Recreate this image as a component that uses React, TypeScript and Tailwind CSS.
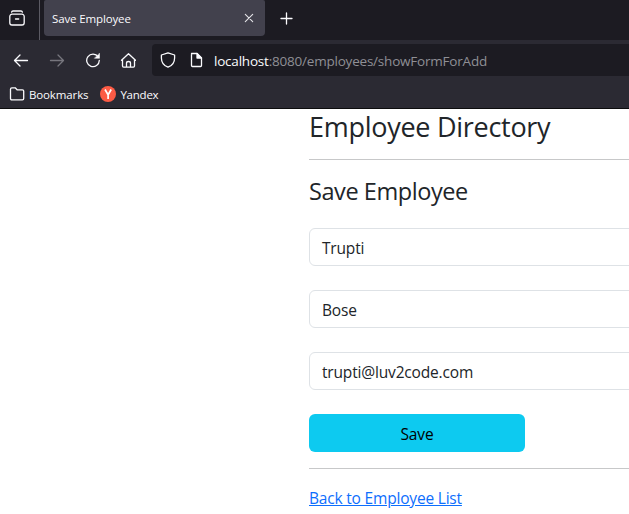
import type { ReactNode } from "react";

function Icon({ className, children }: { className: string; children: ReactNode }) {
  return (
    <svg
      viewBox="0 0 16 16"
      className={`h-4 w-4 shrink-0 ${className}`}
      fill="none"
      stroke="currentColor"
      strokeWidth="1.3"
      strokeLinecap="round"
      strokeLinejoin="round"
    >
      {children}
    </svg>
  );
}

function TabStrip() {
  return (
    <div className="flex h-10 bg-[#1c1b22]">
      <div className="flex w-10 border-r border-[#5b5a63] pt-[10px] pl-[9px]">
        <Icon className="text-[#fbfbfe]">
          <path d="M2.600 2.200Q2.800 1 4 1h8q1.200 0 1.400 1.200M3 4.200h10a2.200 2.200 0 0 1 2.200 2.200v6.400a2.200 2.200 0 0 1-2.200 2.200H3A2.200 2.200 0 0 1 .8 12.800V6.400A2.200 2.200 0 0 1 3 4.200zM6.500 9h3.200" />
        </Icon>
      </div>
      <div className="ml-1 flex h-9 w-[221px] items-center justify-between rounded-b-[4px] rounded-t-[2px] bg-[#42414d] pr-2 pl-2">
        <span className="pt-[2px] text-[11.5px] tracking-[-0.13px]">Save Employee</span>
        <Icon className="text-[#e4e4e8]">
          <path d="m4.3 4.3 7.4 7.4m0-7.4-7.4 7.4" strokeWidth="1.1" />
        </Icon>
      </div>
      <div className="pt-[11px] pl-[14px]">
        <Icon className="text-[#fbfbfe]">
          <path d="M7.5 2v11M2 7.5h11" />
        </Icon>
      </div>
    </div>
  );
}

function NavBar() {
  return (
    <div className="flex h-10 items-center bg-[#2b2a33] text-[#fbfbfe]">
      <Icon className="ml-[13px]">
        <path d="M14.5 8.5h-13M7 3 1.5 8.5 7 14" />
      </Icon>
      <Icon className="ml-5 text-[#77767e]">
        <path d="M1.5 8.5h13M9 3l5.500 5.500L9 14" />
      </Icon>
      <Icon className="ml-5">
        <path d="M13.200 4.800A6.300 6.300 0 1 0 14.300 8.500" />
        <path d="M14.500 1.500v4.800H9.700z" fill="currentColor" strokeWidth="0.500" />
      </Icon>
      <Icon className="ml-[19px]">
        <path d="M1.500 8.300 8.500 1.700 15.500 8.300M2.500 7.500v6.600q0 1.100 1.100 1.100h9.800q1.100 0 1.100-1.100V7.500M6.500 15v-3.800Q6.500 9.500 8.500 9.500T10.500 11.200V15" />
      </Icon>
      <div className="ml-4 flex h-8 flex-1 items-center rounded-l-[4px] bg-[#1c1b22] pl-2">
        <Icon className="">
          <path d="M8 .8 14.600 3v3c0 4-2 7.500-6.600 9.200C3.400 13.500 1.400 10 1.400 6V3z" />
        </Icon>
        <Icon className="ml-3">
          <path d="M3.500 1.500H9l4.500 4.500v7.500q0 1-1 1h-8q-1 0-1-1v-11q0-1 1-1z" />
          <path d="M9 1.500v4.500h4.500z" fill="currentColor" />
        </Icon>
        <span className="ml-[10px] pt-[2px] text-[13.500px] text-[#8f8f95] tracking-[-0.210px]">
          <span className="text-[#fbfbfe]">localhost</span>:8080/employees/showFormForAdd
        </span>
      </div>
    </div>
  );
}

function BookmarksBar() {
  return (
    <div className="flex h-[29px] items-center border-b border-[#0c0c0d] bg-[#2b2a33] text-[11.500px]">
      <Icon className="ml-[9px]">
        <path d="M1.500 3.200q0-1.400 1.400-1.400h3.300l1.900 2h5.300q1.300 0 1.300 1.300v7.400q0 1.300-1.300 1.300H2.800q-1.300 0-1.300-1.300z" />
      </Icon>
      <span className="ml-1 pt-[2px] tracking-[-0.130px]">Bookmarks</span>
      <svg viewBox="0 0 16 16" className="ml-3 h-4 w-4">
        <circle cx="8" cy="8" r="8" fill="#fc5b45" />
        <path d="M5 3.500 8.100 8.800V13M11.200 3.500 8.100 8.800" fill="none" stroke="#fff" strokeWidth="1.700" />
      </svg>
      <span className="ml-1 pt-[2px] tracking-[-0.230px]">Yandex</span>
    </div>
  );
}

function Field({ value }: { value: string }) {
  return (
    <div className="mb-6 flex h-[38px] w-[400px] items-center rounded-[6px] border border-[#dee2e6] pl-3">
      <span className="pt-[3px] text-[15.500px] tracking-[-0.170px]">{value}</span>
    </div>
  );
}

export default function App() {
  return (
    <div className="h-[514px] w-[629px] overflow-hidden bg-white font-['Open_Sans','Noto_Sans',sans-serif] text-[#fbfbfe]">
      <TabStrip />
      <NavBar />
      <BookmarksBar />
      <main className="ml-[309px] h-[405px] overflow-hidden text-[#212529]">
        <h1 className="h-[50px] text-[27px] leading-[35px] tracking-[-0.280px]">Employee Directory</h1>
        <hr className="w-[400px] border-[#c7c8c9]" />
        <h2 className="h-[68px] pt-4 text-[23.500px] leading-[31px] tracking-[-0.430px]">Save Employee</h2>
        <Field value="Trupti" />
        <Field value="Bose" />
        <Field value="trupti@luv2code.com" />
        <button className="block h-[38px] w-[216px] rounded-[6px] bg-[#0dcaf0] pt-[3px] text-[15.500px] tracking-[-0.150px] text-black">
          Save
        </button>
        <hr className="mt-4 mb-[17px] w-[400px] border-[#c7c8c9]" />
        <a href="#" className="text-[15.500px] leading-6 tracking-[-0.190px] text-[#0d6efd] underline">
          Back to Employee List
        </a>
      </main>
    </div>
  );
}
